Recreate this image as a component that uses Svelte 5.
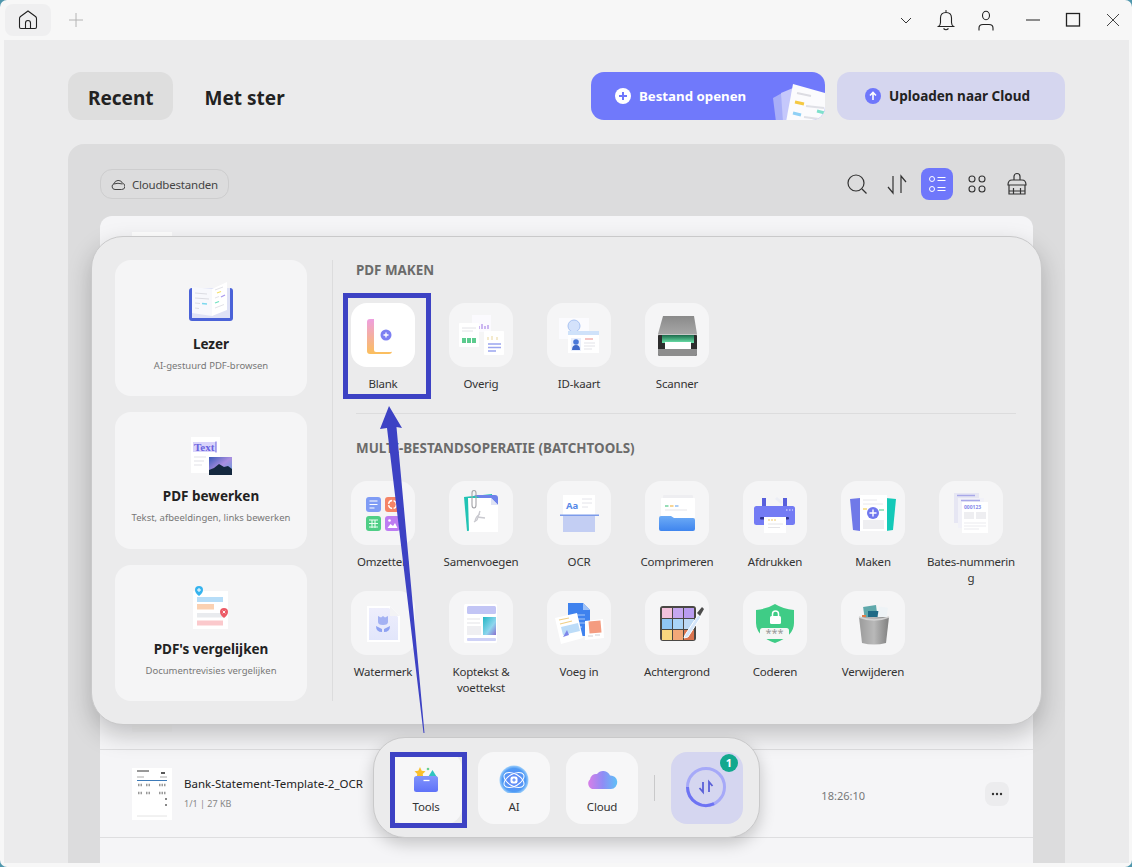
<script>
    const createTools = [
        { label: 'Blank', icon: blank, bright: true },
        { label: 'Overig', icon: overig },
        { label: 'ID-kaart', icon: idkaart },
        { label: 'Scanner', icon: scanner }
    ];

    const batchTools = [
        { label: 'Omzetten', icon: omzetten },
        { label: 'Samenvoegen', icon: samenvoegen },
        { label: 'OCR', icon: ocr },
        { label: 'Comprimeren', icon: comprimeren },
        { label: 'Afdrukken', icon: afdrukken },
        { label: 'Maken', icon: maken },
        { label: 'Bates-nummerin\ng', icon: bates },
        { label: 'Watermerk', icon: watermerk },
        { label: 'Koptekst &\nvoettekst', icon: koptekst },
        { label: 'Voeg in', icon: voegin },
        { label: 'Achtergrond', icon: achtergrond },
        { label: 'Coderen', icon: coderen },
        { label: 'Verwijderen', icon: verwijderen }
    ];

    const modes = [
        { title: 'Lezer', sub: 'AI-gestuurd PDF-browsen', icon: lezer },
        { title: 'PDF bewerken', sub: 'Tekst, afbeeldingen, links bewerken', icon: bewerken },
        { title: "PDF's vergelijken", sub: 'Documentrevisies vergelijken', icon: vergelijken }
    ];

    // rows hidden under the popover only show a sliver of their thumbnail
    const hiddenRows = [0, 1, 2, 3, 4, 5];
    const swatches = ['#f3c1dc', '#c5a7f0', '#8fc6f5', '#a9d4f7', '#f7d77e', '#f2a878'];
</script>

{#snippet blank()}
    <svg class="ic" viewBox="0 0 64 64">
        <defs><linearGradient id="bl" x1="0" y1="0" x2="0" y2="1"><stop offset="0" stop-color="#ee9fe0"/><stop offset="1" stop-color="#fbbf5c"/></linearGradient></defs>
        <rect x="16" y="16" width="25" height="35" rx="3" fill="url(#bl)"/>
        <rect x="23" y="14" width="19" height="35" rx="2" fill="#fff"/>
        <circle cx="35" cy="32" r="5.5" fill="#7c7ff2"/>
        <path d="M35 29.5v5M32.5 32h5" stroke="#fff" stroke-width="1.3"/>
    </svg>
{/snippet}

{#snippet overig()}
    <svg class="ic" viewBox="0 0 64 64">
        <rect x="23" y="12" width="19" height="17" fill="#fbfafe"/>
        <path d="M30 26v-3M33 26v-5M36 26v-3M39 26v-4" stroke="#c0a6ee" stroke-width="1.6"/>
        <rect x="10" y="20" width="20" height="24" rx="1" fill="#fff"/>
        <path d="M13 25h14M13 28h11" stroke="#e2e2e6" stroke-width="1"/>
        <path d="M13 37.5h4M18 37.5h4M23 37.5h4" stroke="#5ccb8e" stroke-width="5"/>
        <rect x="35" y="28" width="20" height="24" rx="1" fill="#fff"/>
        <path d="M39 34v3M43 33v4M48 34v3" stroke="#f0e2b8" stroke-width="1.4"/>
        <path d="M39 41h13M39 44.500h13M39 48h8" stroke="#9aa5ef" stroke-width="1.4"/>
    </svg>
{/snippet}

{#snippet idkaart()}
    <svg class="ic" viewBox="0 0 64 64">
        <rect x="12" y="15" width="30" height="21" fill="#fbfbfe"/>
        <circle cx="27" cy="23" r="6" fill="#d4e2fb" stroke="#a9c3f2"/>
        <rect x="21" y="28" width="31" height="22" fill="#fff"/>
        <rect x="21" y="28" width="31" height="4" fill="#cfe2fa"/>
        <rect x="24" y="35" width="10" height="13" fill="#e9effc"/>
        <circle cx="29" cy="39" r="2.800" fill="#4a78d8"/>
        <path d="M25 47q0-5 4-5t4 5z" fill="#3f68c8"/>
        <path d="M38 36h8" stroke="#ef9c9c" stroke-width="1.200"/>
        <path d="M37 40h11M37 43h11M37 46h8" stroke="#e3e3e8" stroke-width="1"/>
    </svg>
{/snippet}

{#snippet scanner()}
    <svg class="ic" viewBox="0 0 64 64">
        <defs>
            <linearGradient id="sl" x1="0" y1="0" x2="0" y2="1"><stop offset="0" stop-color="#8a8a8a"/><stop offset="1" stop-color="#a6a6a6"/></linearGradient>
            <linearGradient id="sg" x1="0" y1="0" x2="0" y2="1"><stop offset="0" stop-color="#1c6b4c"/><stop offset="1" stop-color="#6fe8ae"/></linearGradient>
        </defs>
        <rect x="13" y="31" width="39" height="22" rx="2" fill="#2d2d2d"/>
        <path d="M18 13h31l3 18H13z" fill="url(#sl)"/>
        <path d="M13 31h39v1H13z" fill="#c9c9c9"/>
        <rect x="17" y="32" width="32" height="8" fill="url(#sg)"/>
        <rect x="20" y="39" width="26" height="7" fill="#fff"/>
        <path d="M13 46h39v5q0 2-2 2H15q-2 0-2-2z" fill="#8d8d8d"/>
    </svg>
{/snippet}

{#snippet omzetten()}
    <svg class="ic" viewBox="0 0 64 64">
        <rect x="15" y="16" width="15" height="15" rx="3" fill="#7f9cf5"/>
        <path d="M18.500 20h8M18.500 23.500h8M18.500 27h5" stroke="#fff" stroke-width="1.200"/>
        <rect x="34" y="16" width="15" height="15" rx="3" fill="#f58466"/>
        <circle cx="41.500" cy="23.500" r="4" fill="none" stroke="#fff" stroke-width="1.400" stroke-dasharray="5 1.500"/>
        <rect x="15" y="35" width="15" height="15" rx="3" fill="#4fce86"/>
        <path d="M18 39h9M18 42.500h9M18 46h9M21 39v8M24 39v8" stroke="#e8fff0" stroke-width="1.100"/>
        <rect x="34" y="35" width="15" height="15" rx="3" fill="#bd7cf2"/>
        <circle cx="38.500" cy="39.500" r="1.300" fill="#fff"/>
        <path d="M36.500 47l3-4 2.500 2 2-3 2.500 5z" fill="#fff"/>
    </svg>
{/snippet}

{#snippet samenvoegen()}
    <svg class="ic" viewBox="0 0 64 64">
        <path d="M15 16l28-3 2 34-27 3z" fill="#21c3b4"/>
        <path d="M25 14h21q3 0 3 3v10z" fill="#6e82ea"/>
        <path d="M19 17h23l7 7v27H20z" fill="#fff"/>
        <path d="M42 17l7 7h-7z" fill="#dfe3f4"/>
        <path d="M31 30l-3 9M28 39l-3 2M28 36l8 1M31 33q-4 2-5 7" stroke="#c9c9cf" stroke-width="1.300" fill="none"/>
        <path d="M27 15v9q0 3-2 3t-2-3V12q0-2.500 2-2.500T27 12v11" stroke="#a4a4a8" stroke-width="1.100" fill="none"/>
    </svg>
{/snippet}

{#snippet ocr()}
    <svg class="ic" viewBox="0 0 64 64">
        <rect x="16" y="14" width="32" height="20" fill="#fff"/>
        <text x="19" y="28" class="ic-aa">Aa</text>
        <path d="M35 18h10M35 22h10M35 26h6" stroke="#e4e4ea" stroke-width="1"/>
        <rect x="13" y="33.500" width="39" height="1.500" fill="#7c9bea"/>
        <rect x="16" y="35" width="32" height="16" fill="#c3cef3"/>
    </svg>
{/snippet}

{#snippet comprimeren()}
    <svg class="ic" viewBox="0 0 64 64">
        <defs><linearGradient id="cf" x1="0" y1="0" x2="0" y2="1"><stop offset="0" stop-color="#6eacf6"/><stop offset="1" stop-color="#3f85ee"/></linearGradient></defs>
        <rect x="18" y="14" width="30" height="6" rx="1" fill="#eeeef1"/>
        <rect x="16" y="17" width="34" height="20" rx="1" fill="#fff"/>
        <path d="M20 25h3.500" stroke="#5ecb8e" stroke-width="1.300"/>
        <path d="M25 25h3.500" stroke="#f3be5c" stroke-width="1.300"/>
        <path d="M30 25h3.500" stroke="#7fb3f2" stroke-width="1.300"/>
        <path d="M20 29h22" stroke="#e9e9ed" stroke-width="1.200"/>
        <path d="M14 37q0-2 2-2h10l3 2h19q2 0 2 2v9q0 2-2 2H16q-2 0-2-2z" fill="url(#cf)"/>
    </svg>
{/snippet}

{#snippet afdrukken()}
    <svg class="ic" viewBox="0 0 64 64">
        <path d="M34 16l6 5-2 2-6-5z" fill="#eceef5"/>
        <rect x="19" y="17" width="4" height="9" fill="#585fdc"/>
        <rect x="40" y="17" width="4" height="9" fill="#585fdc"/>
        <rect x="11" y="25" width="41" height="19" rx="2.500" fill="#737bf4"/>
        <path d="M43 29h1.500M46 29h1.500M49 29h1" stroke="#e8e9ff" stroke-width="1"/>
        <rect x="17" y="36" width="29" height="2.500" rx="1" fill="#2f3390"/>
        <rect x="21" y="36" width="22" height="16" fill="#fff"/>
        <path d="M25 39h2M28 39h2M31 39h2" stroke="#f2c96a" stroke-width="1.200"/>
        <path d="M25 43h15M25 46.500h12" stroke="#e4e4e8" stroke-width="1"/>
    </svg>
{/snippet}

{#snippet maken()}
    <svg class="ic" viewBox="0 0 64 64">
        <path d="M9 18l10-1v33l-7-1z" fill="#7079e8"/>
        <path d="M55 18l-10-1v33l7-1z" fill="#14c9b8"/>
        <rect x="19" y="14" width="27" height="36" fill="#fff"/>
        <path d="M22 19h14M22 23h20" stroke="#e8e8ec" stroke-width="1"/>
        <path d="M22 28h4" stroke="#f3d15c" stroke-width="1.200"/>
        <path d="M38 29h5" stroke="#6cd39b" stroke-width="1.200"/>
        <rect x="22" y="39" width="21" height="9" fill="#eeeef1"/>
        <circle cx="32" cy="32" r="6" fill="#7078ee"/>
        <path d="M32 28.500v7M28.500 32h7" stroke="#fff" stroke-width="1.400"/>
    </svg>
{/snippet}

{#snippet bates()}
    <svg class="ic" viewBox="0 0 64 64">
        <rect x="15" y="12" width="25" height="30" fill="#e6e6f3"/>
        <path d="M18 14.500h18" stroke="#a8a8e8" stroke-width="1.500"/>
        <rect x="19" y="17" width="26" height="30" fill="#f1f1f8"/>
        <path d="M22 19.500h19" stroke="#a8a8e8" stroke-width="1.500"/>
        <rect x="23" y="21" width="26" height="31" fill="#fff"/>
        <text x="25" y="27.500" class="ic-num">000123</text>
        <rect x="25" y="31" width="10" height="7" fill="#eeeef1"/>
        <rect x="37" y="31" width="10" height="7" fill="#eeeef1"/>
        <path d="M25 42h22M25 45h22M25 48h15" stroke="#ececf0" stroke-width="1.200"/>
    </svg>
{/snippet}

{#snippet watermerk()}
    <svg class="ic" viewBox="0 0 64 64">
        <defs><linearGradient id="wm" x1="0" y1="0" x2="0" y2="1"><stop offset="0" stop-color="#eeeefc"/><stop offset="1" stop-color="#e2e6fb"/></linearGradient></defs>
        <path d="M16 15h23l10 10v26H16z" fill="#fff"/>
        <path d="M18 17h20l9 9v23H18z" fill="url(#wm)"/>
        <path d="M39 15l10 10H39z" fill="#f3f3f5"/>
        <path d="M27 25l3 1.500 2-1.500 2 1.500 3-1.500v6q0 3-5 3t-5-3z" fill="#a3b1f3"/>
        <path d="M25 35l6 3v3q-6 0-6-6zM39 35l-6 3v3q6 0 6-6z" fill="#8fa2f2"/>
    </svg>
{/snippet}

{#snippet koptekst()}
    <svg class="ic" viewBox="0 0 64 64">
        <defs><linearGradient id="kt" x1="0" y1="0" x2="1" y2="1"><stop offset="0" stop-color="#23b7c4"/><stop offset=".6" stop-color="#8fd6ee"/><stop offset="1" stop-color="#8b6fd0"/></linearGradient></defs>
        <rect x="15" y="13" width="33" height="39" rx="1.500" fill="#fff"/>
        <rect x="18" y="15" width="29" height="8" rx="1.500" fill="#c2c5f5"/>
        <path d="M18 28h13M18 32h13" stroke="#e3e3e8" stroke-width="1.200"/>
        <rect x="18" y="35" width="14" height="9" fill="#efeff2"/>
        <rect x="34" y="26" width="13" height="18" fill="url(#kt)"/>
        <rect x="18" y="47" width="29" height="3" rx="1" fill="#cfd2f6"/>
    </svg>
{/snippet}

{#snippet voegin()}
    <svg class="ic" viewBox="0 0 64 64">
        <path d="M21 12h15l7 7v26H21z" fill="#3f82ee"/>
        <path d="M36 12l7 7h-7z" fill="#9fc2f7"/>
        <path d="M27 24h11M27 28h11M27 32h11M27 36h8" stroke="#a9c8f7" stroke-width="1"/>
        <path d="M38 30l18-2 1 19-19 2z" fill="#fff"/>
        <rect x="42" y="30" width="12" height="12" fill="#f49c80" transform="rotate(-5 48 36)"/>
        <path d="M41 45h5M48 44h5" stroke="#cfcfd4" stroke-width="1"/>
        <path d="M8 27l22-5 6 25-22 6z" fill="#fff"/>
        <path d="M12 29l10-2M13 33l12-3" stroke="#f0cf86" stroke-width="1.200"/>
        <path d="M14 36l17-4 2 8-17 4z" fill="#bcdcf8"/>
        <path d="M16 46l4-7 2 5z" fill="#7d86ea"/>
    </svg>
{/snippet}

{#snippet achtergrond()}
    <svg class="ic" viewBox="0 0 64 64">
        <rect x="15" y="15" width="36" height="35" rx="3" fill="#4a4845"/>
        {#each swatches as color, i}
            <rect x={17 + (i % 2) * 11} y={17 + Math.floor(i / 2) * 11} width="10" height="10" fill={color}/>
        {/each}
        <rect x="39" y="17" width="10" height="10" fill="#b99cf0"/>
        <rect x="39" y="28" width="10" height="10" fill="#bcd9f5"/>
        <rect x="39" y="39" width="10" height="10" fill="#d9734e"/>
        <path d="M40 44l13-20 3 2-13 20-4 1z" fill="#d5e6fb" stroke="#fff"/>
        <path d="M52 22l5-6 2 2-4 7z" fill="#4c4c4c"/>
    </svg>
{/snippet}

{#snippet coderen()}
    <svg class="ic" viewBox="0 0 64 64">
        <path d="M32 13q8 5 19 6v13q0 13-19 20-19-7-19-20V19q11-1 19-6z" fill="#3fcc86"/>
        <rect x="27" y="25" width="11" height="8" rx="1.500" fill="#fff"/>
        <path d="M29.500 25v-2a3 3 0 0 1 6 0v2" fill="none" stroke="#fff" stroke-width="1.500"/>
        <rect x="17" y="37" width="29" height="11" rx="2.500" fill="#f4f7f5"/>
        <text x="31.500" y="46" class="ic-pw">***</text>
    </svg>
{/snippet}

{#snippet verwijderen()}
    <svg class="ic" viewBox="0 0 64 64">
        <defs><linearGradient id="bin" x1="0" y1="0" x2="1" y2="0"><stop offset="0" stop-color="#9b9b9b"/><stop offset=".5" stop-color="#b9b9b9"/><stop offset="1" stop-color="#7f7f7f"/></linearGradient></defs>
        <rect x="23" y="15" width="13" height="15" fill="#5fa8ab" transform="rotate(-8 29 22)"/>
        <rect x="27" y="20" width="13" height="11" fill="#1f6a86"/>
        <rect x="37" y="16" width="9" height="14" fill="#eef3f6" transform="rotate(8 41 23)"/>
        <rect x="21" y="24" width="4" height="7" fill="#e07c48"/>
        <path d="M18 26h30l-3 26q-12 3-24 0z" fill="url(#bin)"/>
        <path d="M18 26q15 6 30 0" fill="none" stroke="#d2d2d2" stroke-width="1.500"/>
    </svg>
{/snippet}

{#snippet lezer()}
    <svg class="ic-card" viewBox="0 0 64 48">
        <rect x="10" y="12" width="44" height="33" rx="3" fill="#4a62d8"/>
        <rect x="13" y="12" width="38" height="30" fill="#dfe2f6"/>
        <path d="M13 11l20 2v27l-20-3z" fill="#f7f8fc"/>
        <path d="M33 13l15-7v28l-15 6z" fill="#fff"/>
        <path d="M16 17l12 1M16 22l14 1M16 27l5 .5M16 32l4 .5" stroke="#dcdde3" stroke-width="1"/>
        <path d="M23 27.500l5 .5" stroke="#7cd8ee" stroke-width="1.300"/>
        <path d="M36 14l8-3" stroke="#e3e3e8" stroke-width="1"/>
        <path d="M38 17l4-1.500" stroke="#f3e06a" stroke-width="1.300"/>
        <path d="M42 21l4-2" stroke="#a99af0" stroke-width="1.300"/>
        <path d="M36 27l4-1.500" stroke="#6fe0c0" stroke-width="1.300"/>
        <path d="M36 22l4-1.500M36 32l9-3.500" stroke="#e3e3e8" stroke-width="1"/>
    </svg>
{/snippet}

{#snippet bewerken()}
    <svg class="ic-card" viewBox="0 0 64 48">
        <defs><linearGradient id="sky" x1="0" y1="0" x2="1" y2="1"><stop offset="0" stop-color="#3a5bb8"/><stop offset=".5" stop-color="#a98ee0"/><stop offset="1" stop-color="#5f9fd8"/></linearGradient></defs>
        <rect x="12" y="9" width="29" height="36" fill="#fff"/>
        <rect x="14" y="14" width="23" height="10" fill="#d9d4fa"/>
        <text x="15" y="22.500" class="ic-text">Text</text>
        <path d="M37 13.500v11" stroke="#6a63e0" stroke-width="1"/>
        <path d="M15 29h12M15 33h10M15 37h8" stroke="#ececf0" stroke-width="1.300"/>
        <rect x="30" y="29" width="23" height="18" fill="url(#sky)"/>
        <path d="M30 47v-5l5-2 5-4 5 3 4-1 4 3v6z" fill="#14283f"/>
    </svg>
{/snippet}

{#snippet vergelijken()}
    <svg class="ic-card" viewBox="0 0 64 48">
        <rect x="14" y="10" width="35" height="39" fill="#fff"/>
        <rect x="18" y="16" width="26" height="5" fill="#b6ddf8"/>
        <rect x="18" y="23" width="17" height="5.500" fill="#fbd1b2"/>
        <rect x="18" y="32" width="26" height="4.500" fill="#e9ebee"/>
        <rect x="18" y="39.500" width="26" height="5" fill="#fbc9cc"/>
        <path d="M20 15q-4-3-4-6a4 4 0 0 1 8 0q0 3-4 6z" fill="#35b3ee"/>
        <path d="M20 7v4M18 9h4" stroke="#fff" stroke-width="1"/>
        <path d="M45 37q-4-3-4-6a4 4 0 0 1 8 0q0 3-4 6z" fill="#ec5a66"/>
        <path d="M43.700 29.700l2.600 2.600M46.300 29.700l-2.600 2.600" stroke="#fff" stroke-width=".9"/>
    </svg>
{/snippet}

<div class="window">
    <header class="titlebar">
        <button class="home" aria-label="Home">
            <svg width="20" height="20" viewBox="0 0 20 20" fill="none" stroke="#222" stroke-width="1.100">
                <path d="M1.500 8.500q0-1.300 1-2L10 1l7.500 5.500q1 .7 1 2V17q0 1.500-1.500 1.500H3q-1.500 0-1.500-1.500z"/>
                <path d="M7.500 18.500V13a2.500 2.500 0 0 1 5 0v5.500"/>
            </svg>
        </button>
        <svg class="plus" width="14" height="14" viewBox="0 0 14 14" stroke="#b4b4b4" stroke-width="1"><path d="M7 0v14M0 7h14"/></svg>
        <div class="win-actions">
            <svg width="40" height="24" viewBox="0 0 40 24" fill="none" stroke="#333" stroke-width="1"><path d="M15 10l5 5 5-5"/></svg>
            <svg width="40" height="24" viewBox="0 0 40 24" fill="none" stroke="#222" stroke-width="1.100"><path d="M12.500 18.500q2-1.500 2-4V10q0-5.500 5.500-5.500T25.500 10v4.500q0 2.500 2 4z"/><path d="M19 3h2M17.500 20.500q2.500 2.500 5 0"/></svg>
            <svg width="40" height="24" viewBox="0 0 40 24" fill="none" stroke="#222" stroke-width="1.100"><ellipse cx="20" cy="7.500" rx="3.500" ry="4.200"/><path d="M13 22.500V20q0-3.500 4-3.500h6q4 0 4 3.500v2.500"/></svg>
            <span class="win-sep"></span>
            <svg width="40" height="24" viewBox="0 0 40 24" stroke="#222" stroke-width="1.100"><path d="M13 12h14"/></svg>
            <svg width="40" height="24" viewBox="0 0 40 24" fill="none" stroke="#222" stroke-width="1.300"><rect x="13.500" y="5.500" width="13" height="12.500"/></svg>
            <svg width="40" height="24" viewBox="0 0 40 24" stroke="#444" stroke-width="1"><path d="M14 6l12 12M26 6L14 18"/></svg>
        </div>
    </header>

    <main class="main">
        <div class="topbar">
            <div class="tabs">
                <button class="tab active">Recent</button>
                <button class="tab">Met ster</button>
            </div>
            <div class="actions">
                <button class="btn primary">
                    <svg width="16" height="16" viewBox="0 0 16 16"><circle cx="8" cy="8" r="8" fill="#fff"/><path d="M8 4v8M4 8h8" stroke="#6f77fb" stroke-width="2"/></svg>
                    Bestand openen
                    <svg class="btn-art" width="60" height="44" viewBox="0 0 60 44">
                        <path d="M6 20l9-5 5 29H9z" fill="#a8aef8"/>
                        <path d="M14 15l12-5-4 34h-6z" fill="#c5c8fb"/>
                        <path d="M26 6l32 9v29H19z" fill="#fbfbfd"/>
                        <path d="M30 15l14 3" stroke="#dcdce2" stroke-width="2"/>
                        <path d="M28 24l9 2" stroke="#f5c942" stroke-width="3"/>
                        <path d="M39 28l18 2" stroke="#dfe0e6" stroke-width="2"/>
                        <path d="M50 33l8 2" stroke="#7fe0cc" stroke-width="3"/>
                        <path d="M26 35l8 2" stroke="#8fd0f5" stroke-width="3"/>
                        <path d="M37 39l15 2" stroke="#dfe0e6" stroke-width="2"/>
                    </svg>
                </button>
                <button class="btn secondary">
                    <svg width="16" height="16" viewBox="0 0 16 16" fill="none"><circle cx="8" cy="8" r="8" fill="#6f77fb"/><path d="M8 12V5M5 7.500L8 4.500l3 3" stroke="#fff" stroke-width="1.600"/></svg>
                    Uploaden naar Cloud
                </button>
            </div>
        </div>

        <section class="panel">
            <div class="toolbar">
                <button class="chip">
                    <svg width="14" height="14" viewBox="0 0 14 14" fill="none" stroke="#444" stroke-width="1"><path d="M4 12.500a3 3 0 0 1-1-5.800 4.500 4.500 0 0 1 8.500-.5 3.200 3.200 0 0 1-1 6.300z"/><path d="M2.500 7q4.500-1.500 9 0"/></svg>
                    Cloudbestanden
                </button>
                <div class="tools-right">
                    <svg width="40" height="32" viewBox="0 0 40 32" fill="none" stroke="#333" stroke-width="1.200"><circle cx="19" cy="15" r="8"/><path d="M25 21l4.500 4.500"/></svg>
                    <svg width="40" height="32" viewBox="0 0 40 32" fill="none" stroke="#333" stroke-width="1.200"><path d="M16 8v17l-5-6M24 25V8l5 6"/></svg>
                    <span class="view-on">
                        <svg width="32" height="32" viewBox="0 0 32 32" fill="none" stroke="#fff" stroke-width="1"><circle cx="11" cy="11" r="2.500"/><circle cx="11" cy="21" r="2.500"/><path d="M16.500 9.500h8M16.500 12.500h8M16.500 19.500h8M16.500 22.500h8"/></svg>
                    </span>
                    <svg width="40" height="32" viewBox="0 0 40 32" fill="none" stroke="#333" stroke-width="1.100"><circle cx="15" cy="11" r="3"/><circle cx="25" cy="11" r="3"/><circle cx="15" cy="21" r="3"/><circle cx="25" cy="21" r="3"/></svg>
                    <svg width="40" height="32" viewBox="0 0 40 32" fill="none" stroke="#333" stroke-width="1.200"><path d="M17 12V8.500a3 3 0 0 1 6 0V12"/><path d="M11 17q0-5 4-5h10q4 0 4 5z"/><path d="M12 17v9h16v-9M16.500 20v6M23.500 20v6M12 23h16"/></svg>
                </div>
            </div>

            <div class="list">
                {#each hiddenRows as r}
                    <div class="row blank" class:first={r === 0}>
                        <span class="thumb-stub"></span>
                    </div>
                {/each}
                <div class="row">
                    <svg class="thumb" width="40" height="52" viewBox="0 0 40 52">
                        <rect width="40" height="52" fill="#fff"/>
                        <path d="M5 3h12" stroke="#333" stroke-width="1"/>
                        <path d="M29 5h4" stroke="#222" stroke-width="1.500"/>
                        <path d="M5 9h7M28 9h7" stroke="#aaa" stroke-width="1"/>
                        <path d="M5 12.500h30" stroke="#3d7ab8" stroke-width="1"/>
                        <path d="M6 17h5M6 25h5M14 17h4M14 25h4M27 17h7M27 25h7" stroke="#999" stroke-width="2.500" stroke-dasharray="1.500 1"/>
                        <path d="M33 31h2M33 37h2" stroke="#888" stroke-width="2"/>
                        <path d="M5 48h30" stroke="#e4e4e4" stroke-width="1"/>
                    </svg>
                    <div class="file">
                        <div class="file-name">Bank-Statement-Template-2_OCR</div>
                        <div class="file-meta">1/1 | 27 KB</div>
                    </div>
                    <div class="file-time">18:26:10</div>
                    <button class="more" aria-label="Meer">
                        <svg width="12" height="4" viewBox="0 0 12 4" fill="#333"><circle cx="2" cy="2" r="1.200"/><circle cx="6" cy="2" r="1.200"/><circle cx="10" cy="2" r="1.200"/></svg>
                    </button>
                </div>
                <div class="row-end"></div>
            </div>
        </section>
    </main>

    <div class="popover">
        <div class="modes">
            {#each modes as m}
                <div class="mode">
                    {@render m.icon()}
                    <div class="mode-title">{m.title}</div>
                    <div class="mode-sub">{m.sub}</div>
                </div>
            {/each}
        </div>
        <div class="catalog">
            <h3>PDF MAKEN</h3>
            <div class="grid">
                {#each createTools as t}
                    <div class="tool">
                        <span class="tile" class:bright={t.bright}>{@render t.icon()}</span>
                        <span class="tool-label">{t.label}</span>
                    </div>
                {/each}
            </div>
            <hr />
            <h3>MULTI-BESTANDSOPERATIE (BATCHTOOLS)</h3>
            <div class="grid">
                {#each batchTools as t}
                    <div class="tool">
                        <span class="tile">{@render t.icon()}</span>
                        <span class="tool-label">{t.label}</span>
                    </div>
                {/each}
            </div>
        </div>
    </div>

    <div class="dock">
        <button class="dock-item">
            <svg width="32" height="32" viewBox="0 0 32 32">
                <defs><linearGradient id="fold" x1="0" y1="0" x2="0" y2="1"><stop offset="0" stop-color="#8194fc"/><stop offset="1" stop-color="#5f72f8"/></linearGradient></defs>
                <path d="M10 6l1.700 3.700 3.800.5-2.800 2.700.8 4-3.500-2-3.500 2 .8-4-2.800-2.700 3.800-.5z" fill="#fbc02d"/>
                <path d="M22.500 9l5 8h-10z" fill="#2fc4c0"/>
                <circle cx="18" cy="8" r="1.300" fill="#6ad08e"/>
                <rect x="4" y="15" width="24" height="16" rx="2.500" fill="url(#fold)"/>
                <path d="M13.500 19.500h6" stroke="#fff" stroke-width="1.300"/>
            </svg>
            Tools
        </button>
        <button class="dock-item">
            <svg width="32" height="32" viewBox="0 -3 32 32">
                <defs><radialGradient id="ai"><stop offset=".35" stop-color="#5f8cf7"/><stop offset=".8" stop-color="#4f9bf5"/><stop offset="1" stop-color="#9fd0fb"/></radialGradient></defs>
                <circle cx="16" cy="16" r="14.500" fill="url(#ai)"/>
                <ellipse cx="16" cy="16" rx="11" ry="6" fill="none" stroke="#fff" stroke-width="1" transform="rotate(30 16 16)"/>
                <ellipse cx="16" cy="16" rx="11" ry="6" fill="none" stroke="#fff" stroke-width="1" transform="rotate(-30 16 16)"/>
                <rect x="12.500" y="12.500" width="7" height="7" rx="2" fill="#fff"/>
                <path d="M16 14.200v3.600M14.200 16h3.600" stroke="#4f7df2" stroke-width="1.100"/>
            </svg>
            AI
        </button>
        <button class="dock-item">
            <svg width="32" height="32" viewBox="0 -2 32 32">
                <defs><linearGradient id="cl" x1="0" y1="0" x2="1" y2="0"><stop offset="0" stop-color="#d77ee8"/><stop offset=".5" stop-color="#8f8cf5"/><stop offset="1" stop-color="#5fc0f7"/></linearGradient></defs>
                <path d="M8 26a5.500 5.500 0 0 1-4-9.500A6 6 0 0 1 11 11a7.500 7.500 0 0 1 13 1.500A6.500 6.500 0 0 1 25 26z" fill="url(#cl)"/>
            </svg>
            Cloud
        </button>
        <span class="dock-sep"></span>
        <button class="sync" aria-label="Synchroniseren">
            <svg width="44" height="44" viewBox="1 1 44 44" fill="none">
                <circle cx="22" cy="22" r="18.500" stroke="#a6a9f8" stroke-width="3"/>
                <path d="M3.500 22A18.500 18.500 0 0 0 30 38.700" stroke="#6d73f3" stroke-width="3"/>
                <path d="M19 17v10l-3.500-4M25 27V17l3.500 4" stroke="#5a60d8" stroke-width="1.800"/>
            </svg>
            <span class="badge">1</span>
        </button>
    </div>

    <!-- tutorial markup drawn over the screenshot -->
    <span class="mark mark-blank"></span>
    <span class="mark mark-tools"></span>
    <svg class="arrow" width="1132" height="867" viewBox="0 0 1132 867">
        <path d="M389 406L402 428 396.500 427 424.500 733 423.500 733 387 428 380 429z" fill="#3d42c4"/>
    </svg>
</div>

<style>
    :global(body) {
        margin: 0;
        background: #4f97ad;
    }

    .window {
        position: relative;
        width: 1132px;
        height: 867px;
        overflow: hidden;
        border-radius: 7px;
        background: #f7f7f7;
        font-family: "Noto Sans", "Open Sans", sans-serif;
        color: #222;
    }

    button {
        font-family: inherit;
        border: 0;
        padding: 0;
        background: none;
        color: inherit;
    }

    .titlebar {
        display: flex;
        align-items: center;
        height: 40px;
        padding-left: 5px;
        box-sizing: border-box;
    }

    .home {
        display: flex;
        align-items: center;
        justify-content: center;
        width: 46px;
        height: 32px;
        border-radius: 8px;
        background: #efeff0;
    }

    .plus {
        margin-left: 18px;
    }

    .win-actions {
        display: flex;
        align-items: center;
        margin-left: auto;
        margin-right: -1px;
    }

    .win-sep {
        width: 7px;
    }

    .main {
        margin: 0 3px 0 4px;
        height: 823px;
        padding: 32px 64px 0;
        box-sizing: border-box;
        background: #ebebec;
        display: flex;
        flex-direction: column;
        gap: 24px;
    }

    .topbar {
        display: flex;
        justify-content: space-between;
        height: 48px;
    }

    .tabs {
        display: flex;
    }

    .tab {
        height: 48px;
        padding: 3px 19px 0 20px;
        font-size: 19px;
        font-weight: 700;
        border-radius: 13px;
        margin-right: 13px;
    }

    .tab.active {
        background: #dedede;
        margin-right: 12px;
    }

    .actions {
        display: flex;
        gap: 12px;
    }

    .btn {
        position: relative;
        display: flex;
        align-items: center;
        gap: 8px;
        height: 48px;
        border-radius: 13px;
        font-size: 13.5px;
        font-weight: 700;
        overflow: hidden;
    }

    .primary {
        width: 234px;
        padding-left: 24px;
        box-sizing: border-box;
        background: #7079fb;
        color: #fff;
        font-size: 13.25px;
    }

    .btn-art {
        position: absolute;
        right: -2px;
        bottom: -2px;
    }

    .secondary {
        width: 228px;
        box-sizing: border-box;
        padding-right: 7px;
        justify-content: center;
        background: #d5d6ef;
    }

    .panel {
        flex: 1;
        display: flex;
        flex-direction: column;
        border-radius: 16px 16px 0 0;
        background: #dcdcdd;
        padding: 24px 32px 0;
        min-height: 0;
    }

    .toolbar {
        display: flex;
        align-items: center;
        justify-content: space-between;
        height: 32px;
        margin-bottom: 16px;
    }

    .chip {
        display: flex;
        align-items: center;
        gap: 7px;
        height: 30px;
        padding: 0 10px;
        border: 1px solid #cdcdce;
        border-radius: 12px;
        font-size: 11.5px;
        letter-spacing: -0.2px;
        color: #444;
    }

    .tools-right {
        display: flex;
        align-items: center;
        margin-right: -4px;
    }

    .tools-right > svg {
        display: block;
    }

    .view-on {
        display: block;
        width: 32px;
        height: 32px;
        margin: 0 4px;
        border-radius: 8px;
        background: #6f77fb;
    }

    .list {
        flex: 1;
        min-height: 0;
        padding-top: 6px;
        border-radius: 12px 12px 0 0;
        background: #f5f5f7;
        display: flex;
        flex-direction: column;
    }

    .row {
        flex: none;
        display: flex;
        align-items: center;
        height: 88px;
        padding: 0 24px 0 32px;
        box-sizing: border-box;
        border-bottom: 1px solid #dedee0;
    }

    .row.blank {
        align-items: flex-end;
        padding-bottom: 17px;
    }

    .row.first {
        align-items: flex-start;
        padding-top: 10px;
    }

    .thumb-stub {
        width: 40px;
        height: 52px;
        background: #f3f3f4;
    }

    .row.first .thumb-stub {
        background: #fff;
    }

    .file {
        margin-left: 12px;
        flex: 1;
    }

    .file-name {
        font-size: 11.5px;
        line-height: 16px;
        color: #222;
    }

    .file-meta {
        margin-top: 5px;
        font-size: 9px;
        line-height: 14px;
        color: #888;
    }

    .file-time {
        margin-top: 4px;
        margin-right: 120px;
        font-size: 11px;
        color: #777;
    }

    .more {
        display: flex;
        align-items: center;
        justify-content: center;
        width: 24px;
        height: 24px;
        border-radius: 8px;
        background: #ececee;
    }

    .popover {
        position: absolute;
        left: 91px;
        top: 236px;
        width: 951px;
        height: 489px;
        box-sizing: border-box;
        display: flex;
        padding: 23px 0 0 23px;
        border: 1px solid #c9c9ca;
        border-radius: 32px;
        background: #ebebec;
        box-shadow: 0 10px 24px rgba(0, 0, 0, 0.22);
    }

    .modes {
        display: grid;
        grid-auto-rows: 1fr;
        gap: 16px;
        width: 192px;
        height: 441px;
    }

    .mode {
        display: flex;
        flex-direction: column;
        align-items: center;
        padding-top: 16px;
        border-radius: 16px;
        background: #f5f5f6;
    }

    .ic-card {
        display: block;
        width: 64px;
        height: 48px;
    }

    .mode-title {
        margin-top: 10px;
        font-size: 13.5px;
        font-weight: 700;
        line-height: 20px;
    }

    .mode-sub {
        margin-top: 5px;
        font-size: 9.500px;
        line-height: 14px;
        color: #777;
    }

    .catalog {
        margin-left: 25px;
        padding-left: 1px;
        border-left: 1px solid #dcdcdd;
        height: 441px;
    }

    h3 {
        margin: 0 0 23px 22px;
        font-size: 13.400px;
        line-height: 20px;
        font-weight: 700;
        color: #6b6b6b;
    }

    hr {
        margin: 6px 0 24px 22px;
        width: 660px;
        height: 1px;
        border: 0;
        background: #dcdcdd;
    }

    .grid {
        display: grid;
        grid-template-columns: repeat(7, 98px);
        row-gap: 5px;
    }

    .tool {
        display: flex;
        flex-direction: column;
        align-items: center;
    }

    .tile {
        display: block;
        width: 64px;
        height: 64px;
        border-radius: 16px;
        background: #f5f5f6;
    }

    .tile.bright {
        background: #fff;
    }

    .ic {
        display: block;
        width: 64px;
        height: 64px;
    }

    .ic-aa {
        font-size: 9.500px;
        font-weight: 700;
        fill: #5a8ae8;
    }

    .ic-num {
        font-size: 5px;
        font-weight: 700;
        fill: #8589ea;
    }

    .ic-pw {
        font-size: 11px;
        fill: #999;
        text-anchor: middle;
    }

    .ic-text {
        font-family: "Liberation Serif", serif;
        font-size: 11px;
        font-weight: 700;
        fill: #6a63e0;
    }

    .tool-label {
        margin-top: 9px;
        min-height: 31px;
        font-size: 11.5px;
        letter-spacing: -0.2px;
        line-height: 16px;
        text-align: center;
        white-space: pre-line;
        color: #333;
    }

    .dock {
        position: absolute;
        left: 373px;
        top: 737px;
        width: 387px;
        height: 101px;
        box-sizing: border-box;
        display: flex;
        align-items: flex-start;
        padding: 14px 0 0 16px;
        border: 1px solid #c9c9ca;
        border-radius: 32px;
        background: #ebebec;
        box-shadow: 0 6px 16px rgba(0, 0, 0, 0.2);
    }

    .dock-item {
        display: flex;
        flex-direction: column;
        align-items: center;
        gap: 6px;
        width: 72px;
        height: 72px;
        margin-right: 16px;
        padding-top: 9px;
        box-sizing: border-box;
        border-radius: 16px;
        background: #f7f7f8;
        font-size: 11.5px;
        letter-spacing: -0.2px;
        line-height: 16px;
        color: #333;
    }

    .dock-sep {
        width: 1px;
        height: 26px;
        margin: 23px 16px 0 0;
        background: #c9c9ca;
    }

    .sync {
        position: relative;
        display: flex;
        align-items: center;
        justify-content: center;
        width: 72px;
        height: 72px;
        border-radius: 16px;
        background: #d5d6f0;
    }

    .badge {
        position: absolute;
        right: 5px;
        top: 2px;
        width: 18px;
        height: 18px;
        border-radius: 50%;
        background: #12a88e;
        color: #fff;
        font-size: 11px;
        font-weight: 700;
        line-height: 18px;
        text-align: center;
    }

    .mark {
        position: absolute;
        box-sizing: border-box;
        border: 5px solid #3d42c4;
    }

    .mark-blank {
        left: 343px;
        top: 293px;
        width: 88px;
        height: 106px;
    }

    .mark-tools {
        left: 390px;
        top: 752px;
        width: 77px;
        height: 76px;
    }

    .arrow {
        position: absolute;
        left: 0;
        top: 0;
        pointer-events: none;
    }
</style>
